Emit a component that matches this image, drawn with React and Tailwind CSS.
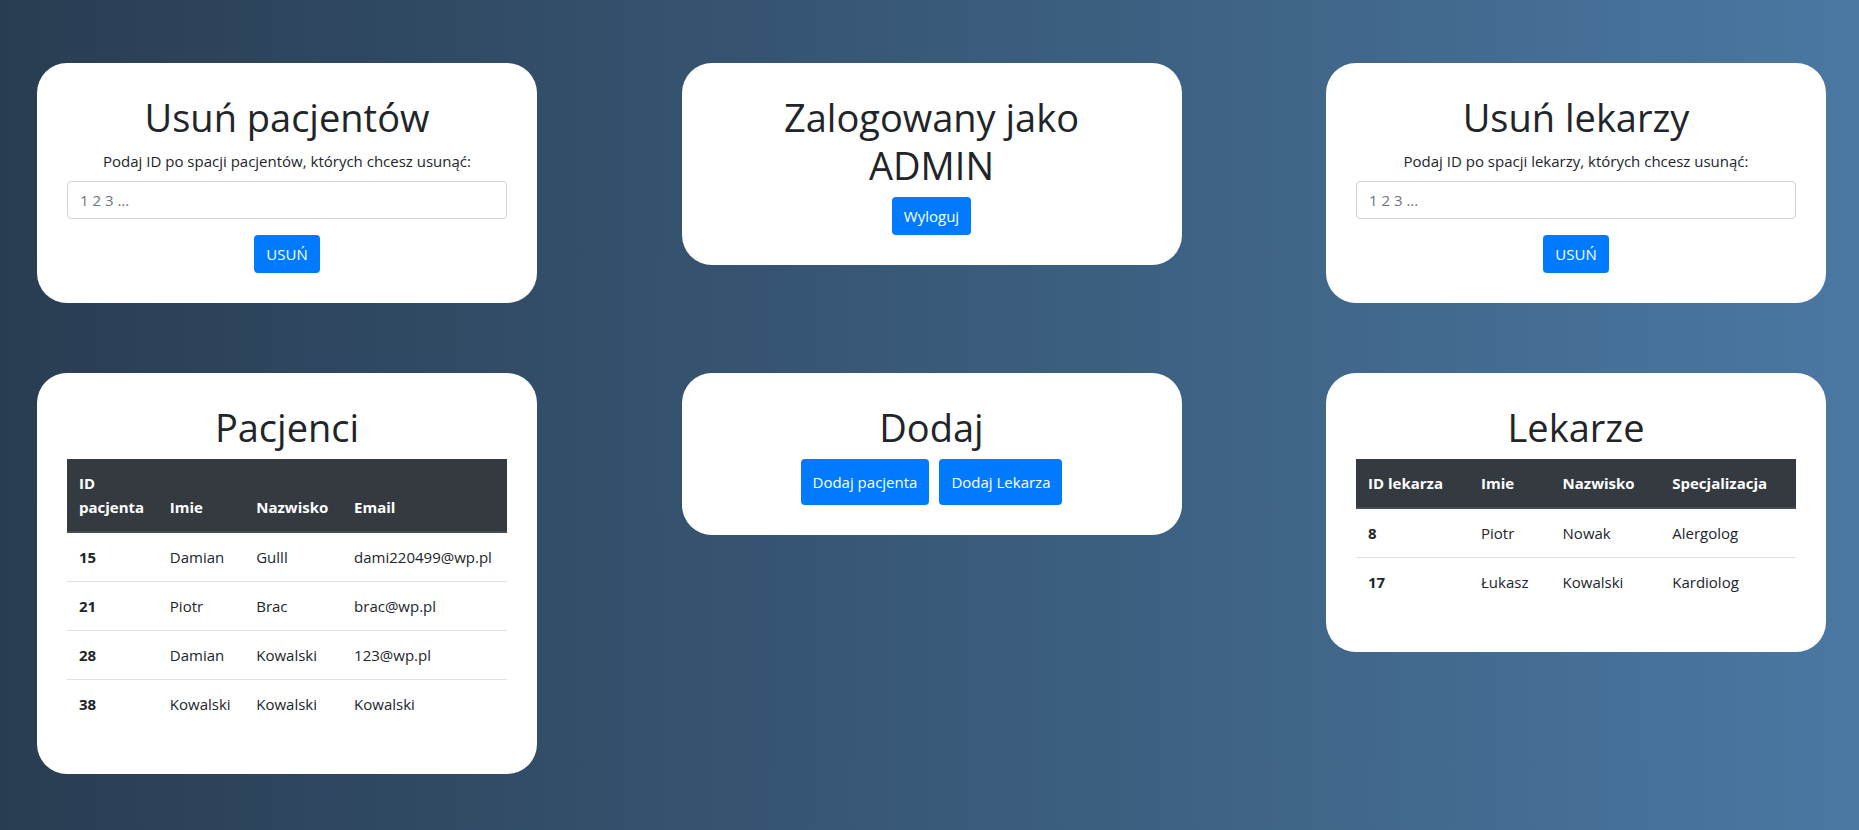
const font = { fontFamily: '"Open Sans", "Noto Sans", sans-serif' };

const patients = [
  { id: 15, imie: "Damian", nazwisko: "Gulll", email: "dami220499@wp.pl" },
  { id: 21, imie: "Piotr", nazwisko: "Brac", email: "brac@wp.pl" },
  { id: 28, imie: "Damian", nazwisko: "Kowalski", email: "123@wp.pl" },
  { id: 38, imie: "Kowalski", nazwisko: "Kowalski", email: "Kowalski" },
];

const doctors = [
  { id: 8, imie: "Piotr", nazwisko: "Nowak", spec: "Alergolog" },
  { id: 17, imie: "Łukasz", nazwisko: "Kowalski", spec: "Kardiolog" },
];

const Card = ({ children }) => (
  <div className="w-[500px] rounded-[30px] bg-white p-[30px] text-center text-[#212529]">
    {children}
  </div>
);

const Title = ({ children }) => (
  <h1 className="mb-2 text-[38px] leading-[48px] font-normal">{children}</h1>
);

const Btn = ({ children, className = "" }) => (
  <button
    className={
      "rounded-[4px] bg-[#007bff] px-3 text-[15px] leading-6 text-white " +
      className
    }
  >
    {children}
  </button>
);

const DeleteCard = ({ title, label }) => (
  <Card>
    <Title>{title}</Title>
    <p className="mb-2 text-[15px] leading-6">{label}</p>
    <input
      placeholder="1 2 3 ..."
      className="block h-[38px] w-full rounded-[4px] border border-[#ced4da] px-3 text-[15px] text-[#495057] placeholder:text-[#6c757d]"
    />
    <Btn className="mt-4 py-[7px]">USUŃ</Btn>
  </Card>
);

const Table = ({ head, rows }) => (
  <table className="mb-4 w-full border-collapse text-left text-[15px] leading-6">
    <thead>
      <tr className="bg-[#343a40] text-white">
        {head.map((h, i) => (
          <th
            key={i}
            className="border-b-2 border-[#454d55] p-3 align-bottom font-bold"
          >
            {h}
          </th>
        ))}
      </tr>
    </thead>
    <tbody>
      {rows.map((r, i) => (
        <tr key={i} className={i ? "border-t border-[#dee2e6]" : ""}>
          {r.map((c, j) =>
            j === 0 ? (
              <th key={j} className="p-3 align-top font-bold">
                {c}
              </th>
            ) : (
              <td key={j} className="p-3 align-top">
                {c}
              </td>
            )
          )}
        </tr>
      ))}
    </tbody>
  </table>
);

export default function App() {
  return (
    <div
      style={font}
      className="min-h-[830px] bg-gradient-to-r from-[#293d52] to-[#4a78a2] pt-[63px] pr-[33px] pb-14 pl-[37px]"
    >
      <div className="flex items-start justify-between">
        <DeleteCard
          title="Usuń pacjentów"
          label="Podaj ID po spacji pacjentów, których chcesz usunąć:"
        />
        <Card>
          <Title>
            Zalogowany jako
            <br />
            ADMIN
          </Title>
          <Btn className="py-[7px]">Wyloguj</Btn>
        </Card>
        <DeleteCard
          title="Usuń lekarzy"
          label="Podaj ID po spacji lekarzy, których chcesz usunąć:"
        />
      </div>

      <div className="mt-[70px] flex items-start justify-between">
        <Card>
          <Title>Pacjenci</Title>
          <Table
            head={[
              <>
                ID
                <br />
                pacjenta
              </>,
              "Imie",
              "Nazwisko",
              "Email",
            ]}
            rows={patients.map((p) => [p.id, p.imie, p.nazwisko, p.email])}
          />
        </Card>
        <Card>
          <Title>Dodaj</Title>
          <div className="flex justify-center gap-[10px]">
            <Btn className="py-[11px]">Dodaj pacjenta</Btn>
            <Btn className="py-[11px]">Dodaj Lekarza</Btn>
          </div>
        </Card>
        <Card>
          <Title>Lekarze</Title>
          <Table
            head={["ID lekarza", "Imie", "Nazwisko", "Specjalizacja"]}
            rows={doctors.map((d) => [d.id, d.imie, d.nazwisko, d.spec])}
          />
        </Card>
      </div>
    </div>
  );
}
